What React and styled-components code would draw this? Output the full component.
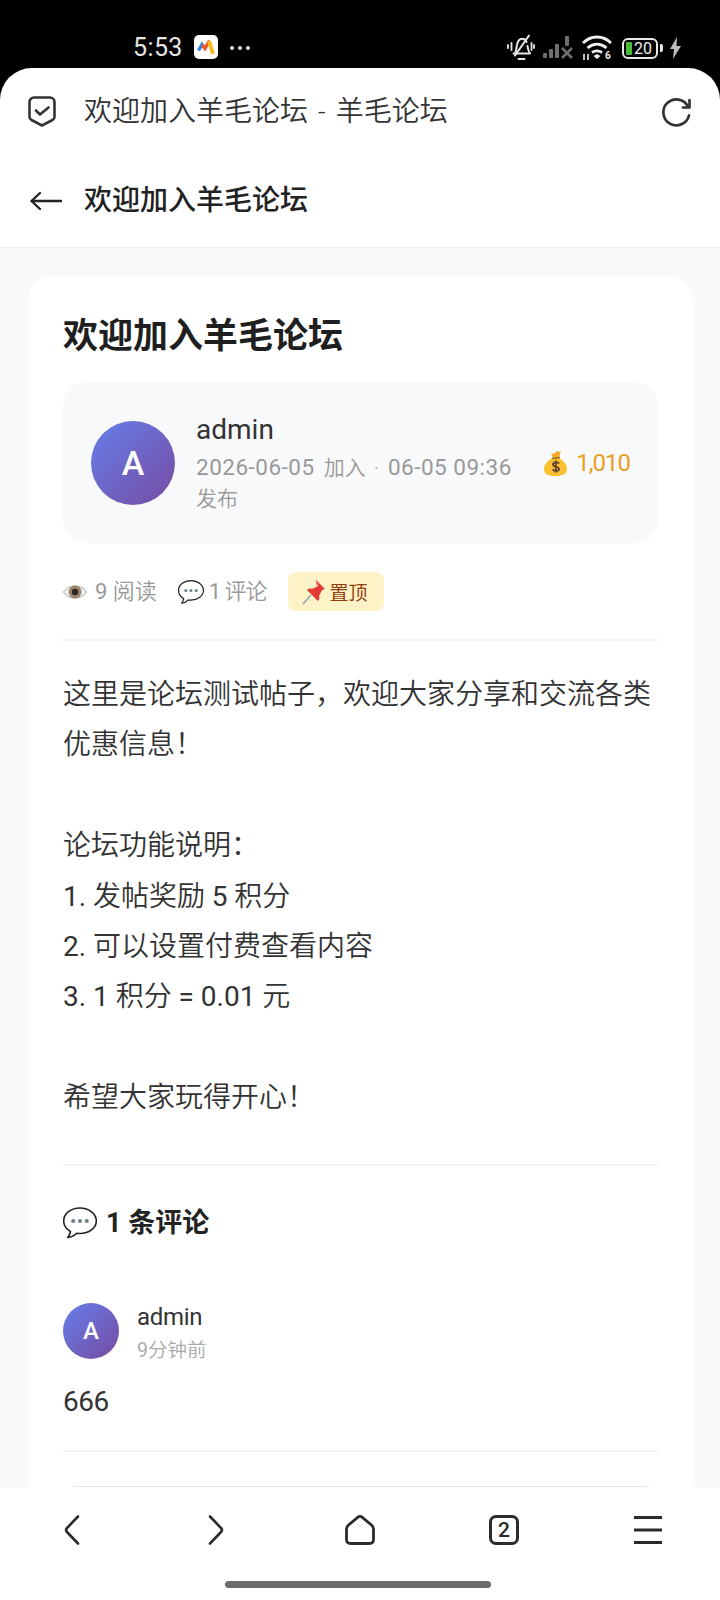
import React from 'react';
import styled, { createGlobalStyle } from 'styled-components';

const GlobalStyle = createGlobalStyle`
    html, body {
        margin: 0;
        padding: 0;
        background: #000;
    }
    * {
        box-sizing: border-box;
    }
    body {
        font-family: Roboto, "Noto Sans CJK SC", sans-serif;
    }
`

const Screen = styled.div`
    display: flex;
    flex-direction: column;
    width: 720px;
    height: 1600px;
    overflow: hidden;
    background: #000;
`

// status bar
const StatusBar = styled.div`
    display: flex;
    align-items: flex-start;
    height: 68px;
    padding-top: 36px;
    flex: none;
`

const Time = styled.span`
    margin-left: 133px;
    font-size: 25px;
    line-height: 24px;
    font-weight: 400;
    letter-spacing: 0.4px;
    color: #e6e6e6;
`

const StatusRight = styled.div`
    display: flex;
    align-items: center;
    gap: 8px;
    height: 24px;
    margin-left: auto;
    margin-right: 38px;
`

const Battery = styled.div`
    display: flex;
    align-items: center;
    margin-left: 2px;
    margin-right: -2px;
`

const BatteryBox = styled.div`
    display: flex;
    align-items: center;
    width: 36px;
    height: 21px;
    padding: 2px;
    gap: 2px;
    border: 2px solid #e8e8e8;
    border-radius: 6px;
`

const BatteryFill = styled.div`
    width: 6px;
    height: 13px;
    border-radius: 1px;
    background: #4cbb3c;
`

const BatteryText = styled.span`
    font-size: 16px;
    line-height: 17px;
    color: #f0f0f0;
`

const BatteryTip = styled.div`
    width: 3px;
    height: 8px;
    margin-left: 2px;
    border-radius: 0 2px 2px 0;
    background: #e8e8e8;
`

// white browser panel
const Panel = styled.div`
    display: flex;
    flex: 1;
    flex-direction: column;
    min-height: 0;
    overflow: hidden;
    border-radius: 32px 32px 0 0;
    background: #fff;
`

const BrowserBar = styled.div`
    display: flex;
    align-items: center;
    flex: none;
    height: 88px;
    padding: 0 28px;
`

const BrowserTitle = styled.div`
    flex: 1;
    margin-left: 28px;
    font-size: 28px;
    line-height: 40px;
    font-weight: 350;
    word-spacing: 3px;
    color: #333;
`

const PageHeader = styled.div`
    display: flex;
    align-items: center;
    flex: none;
    height: 92px;
    padding: 1px 30px 2px;
    border-bottom: 1px solid #eeeff1;
`

const PageTitle = styled.div`
    margin-left: 22px;
    font-size: 28px;
    line-height: 40px;
    font-weight: 500;
    color: #222;
`

const Content = styled.div`
    flex: 1;
    min-height: 0;
    overflow: hidden;
    padding: 28px 27px 0 28px;
    background: #f8f9fa;
`

const Card = styled.div`
    padding: 35px 35px 40px;
    border-radius: 24px 24px 0 0;
    background: #fff;
`

const Title = styled.h1`
    margin: 0 0 21px;
    padding-top: 2px;
    font-size: 35px;
    line-height: 48px;
    font-weight: 700;
    color: #1f1f1f;
`

const AuthorBox = styled.div`
    display: flex;
    align-items: center;
    padding: 28px;
    border-radius: 24px;
    background: #f8f9fa;
`

const Avatar = styled.div`
    display: flex;
    align-items: center;
    justify-content: center;
    flex: none;
    width: ${p => p.$size}px;
    height: ${p => p.$size}px;
    border-radius: 50%;
    background: linear-gradient(135deg, #667eea, #764ba2);
    color: #fff;
    font-size: ${p => p.$fontSize}px;
    font-weight: 500;
`

const AuthorInfo = styled.div`
    flex: 1;
    min-width: 0;
    margin: 0 16px 0 21px;
`

const AuthorName = styled.div`
    height: 40px;
    margin-bottom: 3px;
    font-size: 28px;
    line-height: 40px;
    font-weight: 400;
    color: #333;
`

const AuthorMeta = styled.div`
    font-size: 21px;
    line-height: 31px;
    font-weight: 350;
    color: #999;
`

const MetaDigits = styled.span`
    margin-right: 4px;
    font-size: 22.5px;
    line-height: 1;
    font-weight: 400;
    letter-spacing: 0.5px;
`

const MetaDot = styled.span`
    margin: 0 9px 0 8px;
`

const Points = styled.div`
    display: flex;
    align-items: center;
    flex: none;
    gap: 7px;
    font-size: 24px;
    line-height: 30px;
    letter-spacing: -1px;
    color: #e8a024;
`

const MetaRow = styled.div`
    display: flex;
    align-items: center;
    margin-top: 29px;
    padding-bottom: 28px;
    border-bottom: 2px solid #f2f2f2;
`

const MetaItem = styled.div`
    display: flex;
    align-items: center;
    gap: ${p => p.$gap}px;
    margin-right: 21px;
    font-size: 22px;
    line-height: 39px;
    font-weight: 350;
    letter-spacing: ${p => p.$tracking}px;
    color: #999;
`

const PinBadge = styled.div`
    display: flex;
    align-items: center;
    gap: 4px;
    width: 96px;
    height: 39px;
    padding-left: 14px;
    border-radius: 8px;
    background: #fef3c7;
    font-size: 19px;
    color: #92400e;
`

const Body = styled.div`
    margin-top: 29px;
    font-size: 28px;
    line-height: 50.4px;
    font-weight: 350;
    color: #333;
    white-space: pre-wrap;
`

// digits read at regular weight next to the lighter chinese text
const Num = styled.span`
    font-weight: 400;
`

const CommentSection = styled.div`
    margin-top: 40px;
    padding-top: 37px;
    border-top: 2px solid #f2f2f2;
`

const CommentHeading = styled.h2`
    display: flex;
    align-items: center;
    gap: 9px;
    margin: 0 0 60px;
    font-size: 27px;
    line-height: 40px;
    font-weight: 700;
    color: #222;
`

const CommentRow = styled.div`
    display: flex;
    align-items: flex-start;
    gap: 18px;
`

const CommentName = styled.div`
    margin-bottom: 6px;
    font-size: 24px;
    line-height: 28px;
    font-weight: 400;
    letter-spacing: -0.3px;
    color: #333;
`

const CommentTime = styled.div`
    font-size: 19.5px;
    line-height: 28px;
    font-weight: 350;
    color: #aaa;
`

const CommentText = styled.div`
    margin-top: 12px;
    padding-bottom: 23px;
    border-bottom: 2px solid #f2f2f2;
    font-size: 28px;
    line-height: 50px;
    font-weight: 400;
    letter-spacing: -0.5px;
    color: #333;
`

const ReplyBox = styled.div`
    height: 120px;
    margin-top: 34px;
    border: 2px solid #e8e8e8;
    border-radius: 12px;
`

// bottom browser bar
const BottomBar = styled.div`
    flex: none;
    height: 113px;
    padding-top: 28px;
    background: #fff;
`

const BottomIcons = styled.div`
    display: grid;
    grid-template-columns: repeat(5, 144px);
    justify-items: center;
    height: 30px;
`

const TabCount = styled.div`
    display: flex;
    align-items: center;
    justify-content: center;
    width: 30px;
    height: 30px;
    border: 3px solid #2b2b2b;
    border-radius: 7px;
    font-size: 21px;
    font-weight: 500;
    color: #2b2b2b;
`

const HomeIndicator = styled.div`
    width: 266px;
    height: 7px;
    margin: 36px 0 0 225px;
    border-radius: 4px;
    background: #6b6b6b;
`

const AppIcon = () => (
    <svg width="24" height="24" viewBox="0 0 24 24" style={{ marginLeft: 11, marginTop: -1 }}>
        <rect width="24" height="24" rx="5" fill="#fff" />
        <path d="M4.500 15.500l3.500-6 2.500 3" fill="none" stroke="#2f80ed" strokeWidth="3.400" />
        <path d="M8 10l3 3.500 4.500-8" fill="none" stroke="#ef5a28" strokeWidth="3.400" />
        <path d="M15 6l4 13" fill="none" stroke="#f9b916" strokeWidth="3.800" />
    </svg>
)

const Dots = () => (
    <svg width="22" height="24" viewBox="0 0 22 24" style={{ marginLeft: 11 }}>
        <circle cx="3" cy="12" r="2" fill="#ddd" />
        <circle cx="11" cy="12" r="2" fill="#ddd" />
        <circle cx="19" cy="12" r="2" fill="#ddd" />
    </svg>
)

const MuteBell = () => (
    <svg width="28" height="28" viewBox="0 0 28 28" fill="none" stroke="#e8e8e8" strokeWidth="2" strokeLinecap="round" strokeLinejoin="round">
        <path d="M8.500 18.500c1-2 .8-4.500 1.300-7S12 5.500 14 5c2-.5 4.500.5 5.500 3M20.500 12c.3 3 .8 5 2.500 7.500H6.500" />
        <path d="M11.500 25h6" />
        <path d="M22 1.500L8 21.500" />
        <path d="M4.500 9v7M1 11v3M24.500 9v7M27 11v3" strokeWidth="1.800" />
    </svg>
)

const Signal = () => (
    <svg width="31" height="26" viewBox="0 0 31 26" fill="#6e6e6e">
        <rect x="0" y="18" width="4" height="5" rx="1" />
        <rect x="6" y="14" width="4" height="9" rx="1" />
        <rect x="12" y="9" width="4" height="14" rx="1" />
        <rect x="22" y="1" width="4" height="10" rx="1" />
        <path d="M19 13l10 10M29 13L19 23" stroke="#6e6e6e" strokeWidth="2.600" />
    </svg>
)

const Wifi = () => (
    <svg width="30" height="28" viewBox="0 0 30 28" fill="none" stroke="#f0f0f0" strokeWidth="2.800">
        <path d="M1 9c8-8 20-8 28 0" />
        <path d="M5.500 14c6-5 13-5 19 0" />
        <path d="M10 18.500c3-2 7-2 10 0" />
        <path d="M11.500 22l3.500-2 3.500 2-3.500 3z" fill="#f0f0f0" stroke="none" />
        <path d="M2 20v6M6 20v6" strokeWidth="1.600" />
        <text x="23" y="25" fontSize="10" fill="#f0f0f0" stroke="none" fontWeight="700">6</text>
    </svg>
)

const Bolt = () => (
    <svg width="13" height="22" viewBox="0 0 13 22">
        <path d="M8 0L1 12h4l-1 10 8-13H7.500z" fill="#bdbdbd" />
    </svg>
)

const Shield = () => (
    <svg width="28" height="32" viewBox="0 0 28 32" fill="none" stroke="#333" strokeWidth="2.600" strokeLinejoin="round" strokeLinecap="round">
        <path d="M6 1.500h16a4.500 4.500 0 0 1 4.500 4.500v15c0 1.500-.6 2.300-2 3L14 29.500 3.500 24c-1.400-.7-2-1.500-2-3V6A4.500 4.500 0 0 1 6 1.500z" />
        <path d="M8 14.500l4 4 8.500-7" strokeWidth="2.600" />
    </svg>
)

const Reload = () => (
    <svg width="30" height="30" viewBox="0 0 30 30" fill="none" stroke="#333" strokeWidth="2.700" strokeLinecap="round" strokeLinejoin="round">
        <path d="M27 18.500A13 13 0 1 1 26 9.500" />
        <path d="M27.500 3v7.500H21" />
    </svg>
)

const BackArrow = () => (
    <svg width="32" height="22" viewBox="0 0 32 22" fill="none" stroke="#222" strokeWidth="2.400" strokeLinecap="round" strokeLinejoin="round">
        <path d="M31 11H2" />
        <path d="M10 3l-8.500 8 8.500 8" />
    </svg>
)

const MoneyBag = () => (
    <svg width="25" height="26" viewBox="0 0 25 26">
        <path d="M8 8C3 11 0 15 0 19c0 5 4 7 11 7s12-2 12-7c0-4-3-8-8-11z" fill="#fbc02d" />
        <path d="M9 8l-2-5 3 1 3-3 3 1 1-1-2 7z" fill="#f9a825" />
        <path d="M8 8.500l8-1" stroke="#8d6e25" strokeWidth="1.500" />
        <path d="M15 13.500c-1-1.500-6-1.500-6 1 0 3 6 1.500 6 4.500 0 2.500-5 2.500-6.500 .500M11.800 10.500v12" fill="none" stroke="#5d4037" strokeWidth="1.800" />
    </svg>
)

const Eye = () => (
    <svg width="24" height="18" viewBox="0 0 24 18">
        <path d="M0.500 9C5 1 19 1 23.500 9 19 17 5 17 .500 9z" fill="#eceff1" stroke="#b0a79f" strokeWidth="1" />
        <circle cx="12" cy="9" r="6.500" fill="#a1846c" />
        <circle cx="12" cy="9" r="3.200" fill="#2e2622" />
    </svg>
)

const Bubble = ({ size }) => (
    <svg width={size} height={size} viewBox="0.500 1 25 24">
        <path d="M13 2C6.400 2 1 6 1 11.500c0 3.200 2 6 5 7.700-.2 1.800-1 3.300-2 4.500 2.500-.3 5-1.500 6.500-3.200.8.100 1.600.2 2.500.2 6.600 0 12-4 12-9.200S19.600 2 13 2z" fill="#fff" stroke="#1f2326" strokeWidth="1.200" strokeLinejoin="round" />
        <circle cx="8" cy="11.500" r="1.500" fill="#6d7f88" />
        <circle cx="13" cy="11.500" r="1.500" fill="#6d7f88" />
        <circle cx="18" cy="11.500" r="1.500" fill="#6d7f88" />
    </svg>
)

const Pin = () => (
    <svg width="24" height="26" viewBox="0 0 24 26">
        <path d="M1 25l8-9" stroke="#8fa7b3" strokeWidth="1.600" />
        <path d="M14 1l9 9-3 1-3 6c1 2 0 4-1 5L5 11c1-1 3-2 5-1l6-3z" fill="#e53935" />
        <path d="M14 1l3 3-3 2z" fill="#ef6c60" />
    </svg>
)

const ChevronLeft = () => (
    <svg width="16" height="30" viewBox="0 0 16 30" fill="none" stroke="#2b2b2b" strokeWidth="2.600" strokeLinecap="round" strokeLinejoin="round">
        <path d="M14 1.500L3 13c-1.200 1.300-1.200 2.700 0 4l11 11.500" />
    </svg>
)

const ChevronRight = () => (
    <svg width="16" height="30" viewBox="0 0 16 30" fill="none" stroke="#2b2b2b" strokeWidth="2.600" strokeLinecap="round" strokeLinejoin="round">
        <path d="M2 1.500L13 13c1.200 1.300 1.200 2.700 0 4L2 28.500" />
    </svg>
)

const Home = () => (
    <svg width="30" height="30" viewBox="0 0 30 30" fill="none" stroke="#2b2b2b" strokeWidth="2.800" strokeLinejoin="round">
        <path d="M13 2.200c1.300-1 2.700-1 4 0l9.500 7.800c1.300 1.200 2 2.300 2 4v10.500c0 2.500-1.500 4-4 4h-19c-2.500 0-4-1.500-4-4V14c0-1.700.7-2.800 2-4z" />
    </svg>
)

const Menu = () => (
    <svg width="30" height="30" viewBox="0 0 30 30" stroke="#2b2b2b" strokeWidth="3">
        <path d="M1 2.500h28M1 15h28M1 27.500h28" />
    </svg>
)

const App = () => {
    return (
        <Screen>
            <GlobalStyle />
            <StatusBar>
                <Time>5:53</Time>
                <AppIcon />
                <Dots />
                <StatusRight>
                    <MuteBell />
                    <Signal />
                    <Wifi />
                    <Battery>
                        <BatteryBox>
                            <BatteryFill />
                            <BatteryText>20</BatteryText>
                        </BatteryBox>
                        <BatteryTip />
                    </Battery>
                    <Bolt />
                </StatusRight>
            </StatusBar>
            <Panel>
                <BrowserBar>
                    <Shield />
                    <BrowserTitle>欢迎加入羊毛论坛 - 羊毛论坛</BrowserTitle>
                    <Reload />
                </BrowserBar>
                <PageHeader>
                    <BackArrow />
                    <PageTitle>欢迎加入羊毛论坛</PageTitle>
                </PageHeader>
                <Content>
                    <Card>
                        <Title>欢迎加入羊毛论坛</Title>
                        <AuthorBox>
                            <Avatar $size={84} $fontSize={34}>A</Avatar>
                            <AuthorInfo>
                                <AuthorName>admin</AuthorName>
                                <AuthorMeta>
                                    <MetaDigits>2026-06-05</MetaDigits> 加入<MetaDot>·</MetaDot><MetaDigits>06-05 09:36</MetaDigits> 发布
                                </AuthorMeta>
                            </AuthorInfo>
                            <Points>
                                <MoneyBag />
                                1,010
                            </Points>
                        </AuthorBox>
                        <MetaRow>
                            <MetaItem $gap={8} $tracking={0}><Eye /><span><Num>9</Num> 阅读</span></MetaItem>
                            <MetaItem $gap={5} $tracking={-1}><Bubble size={26} /><span><Num>1</Num> 评论</span></MetaItem>
                            <PinBadge><Pin />置顶</PinBadge>
                        </MetaRow>
                        <Body>
                            这里是论坛测试帖子，欢迎大家分享和交流各类优惠信息！{'\n\n'}
                            论坛功能说明：{'\n'}
                            <Num>1.</Num> 发帖奖励 <Num>5</Num> 积分{'\n'}
                            <Num>2.</Num> 可以设置付费查看内容{'\n'}
                            <Num>3. 1</Num> 积分 <Num>= 0.01</Num> 元{'\n\n'}
                            希望大家玩得开心！
                        </Body>
                        <CommentSection>
                            <CommentHeading><Bubble size={34} />1 条评论</CommentHeading>
                            <CommentRow>
                                <Avatar $size={56} $fontSize={24}>A</Avatar>
                                <div>
                                    <CommentName>admin</CommentName>
                                    <CommentTime><Num>9</Num>分钟前</CommentTime>
                                </div>
                            </CommentRow>
                            <CommentText>666</CommentText>
                        </CommentSection>
                        <ReplyBox />
                    </Card>
                </Content>
                <BottomBar>
                    <BottomIcons>
                        <ChevronLeft />
                        <ChevronRight />
                        <Home />
                        <TabCount>2</TabCount>
                        <Menu />
                    </BottomIcons>
                    <HomeIndicator />
                </BottomBar>
            </Panel>
        </Screen>
    );
}

export default App;
